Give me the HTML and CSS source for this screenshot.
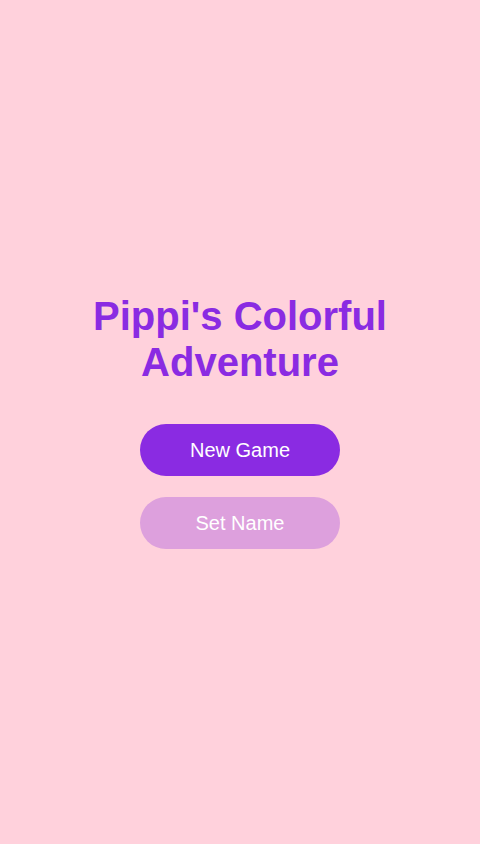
FILE: index.html
```html
<!DOCTYPE html>
<html lang="en">
<head>
    <meta charset="UTF-8">
    <meta name="viewport" content="width=device-width, initial-scale=1.0">
    <title>Pippi's Colorful Adventure</title>
    <link rel="stylesheet" href="styles.css">
</head>
<body>

    <!-- Start Screen -->
    <div class="start-screen">
        <h1 class="title">Pippi's Colorful<br>Adventure</h1>

        <div class="menu">
            <button class="button primary">New Game</button>
            <button class="button secondary">Set Name</button>
        </div>
    </div>

</body>
</html>
```

FILE: styles.css
```css
/* General Reset */
* {
    margin: 0;
    padding: 0;
    box-sizing: border-box;
}

body {
    font-family: "Liberation Sans", Arial, sans-serif;
    background-color: #ffd1dc;
    color: #8a2be2;
}

/* Start Screen */
.start-screen {
    height: 100vh;
    padding-bottom: 2px;
    display: flex;
    flex-direction: column;
    align-items: center;
    justify-content: center;
    text-align: center;
}

.title {
    font-size: 40px;
    line-height: 46px;
    font-weight: bold;
    color: #8a2be2;
    margin-bottom: 39px;
}

.menu {
    display: flex;
    flex-direction: column;
    gap: 21px;
}

.button {
    width: 200px;
    height: 52px;
    border: none;
    border-radius: 26px;
    font-family: inherit;
    font-size: 20px;
    color: white;
    cursor: pointer;
}

.primary {
    background-color: #8a2be2;
}

.secondary {
    background-color: #dda0dd;
}
```
